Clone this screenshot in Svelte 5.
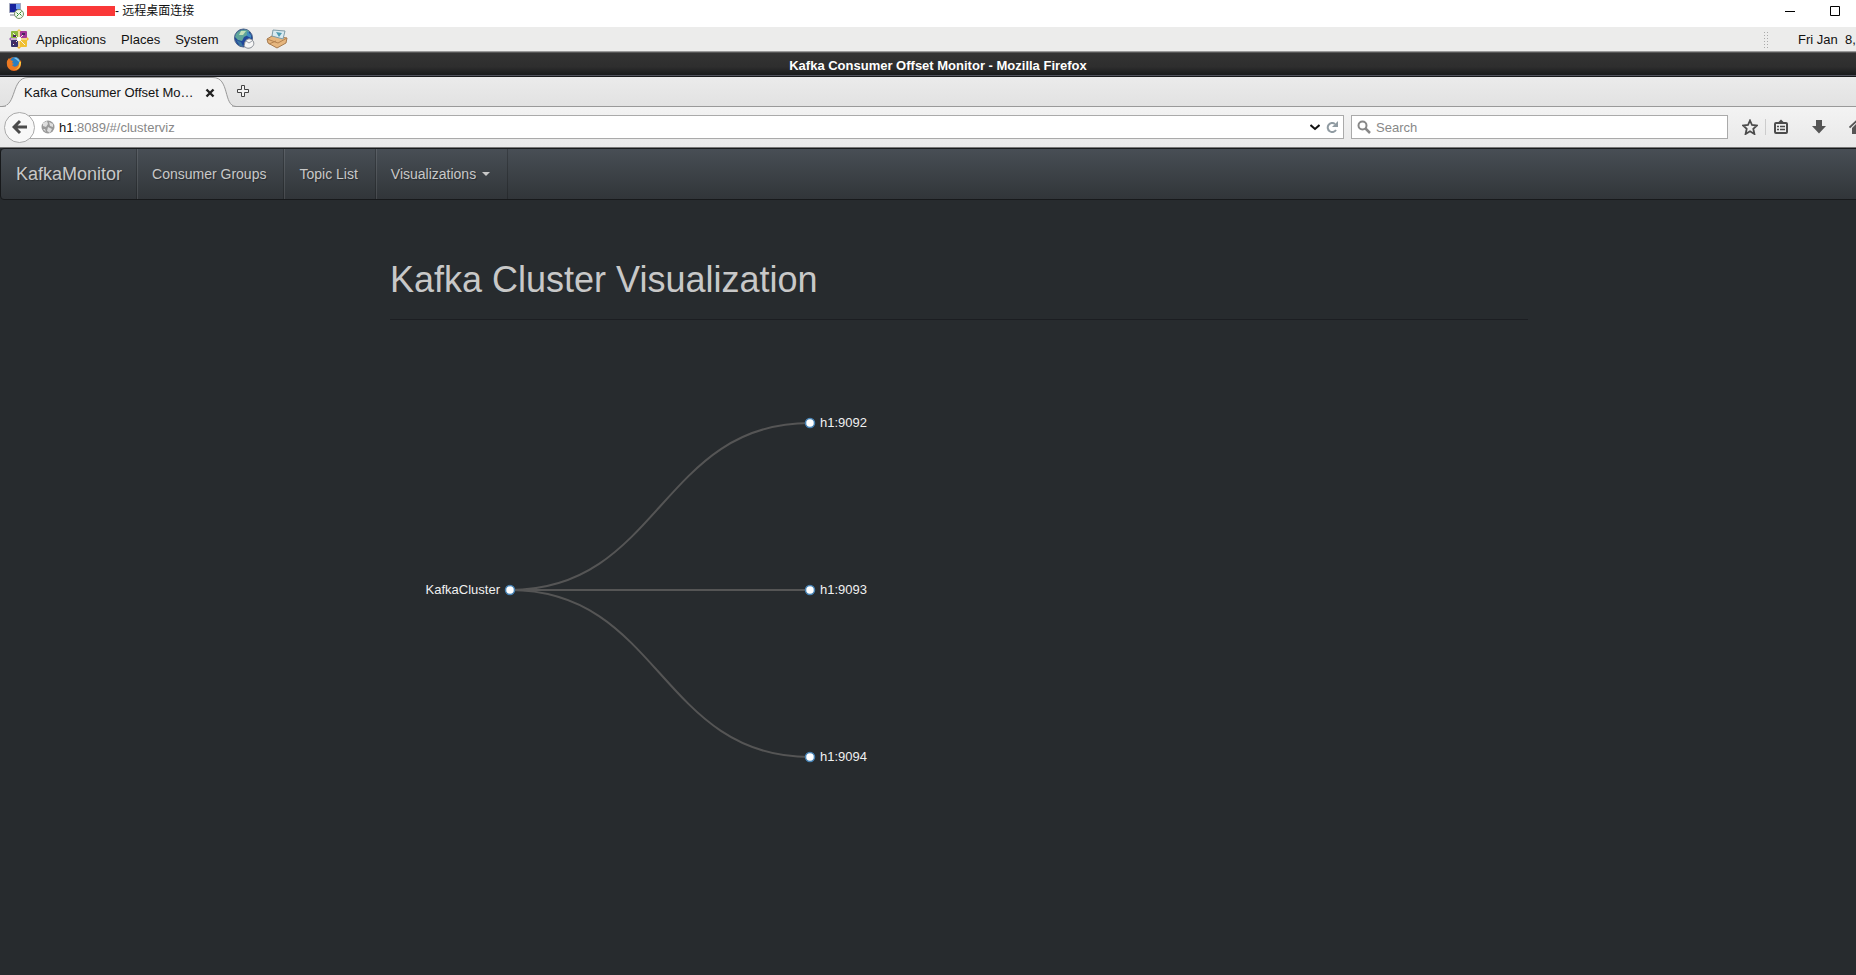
<script lang="ts">
  interface Broker {
    name: string;
    y: number;
  }

  const menus = ['Applications', 'Places', 'System'];
  const navItems = [
    { label: 'Consumer Groups', href: '#/' },
    { label: 'Topic List', href: '#/topics' },
  ];

  // tree layout, in the diagram's own coordinates
  const root = { name: 'KafkaCluster', x: 120, y: 250 };
  const leafX = 420;
  const brokers: Broker[] = [
    { name: 'h1:9092', y: 83 },
    { name: 'h1:9093', y: 250 },
    { name: 'h1:9094', y: 417 },
  ];

  function link(b: Broker) {
    const mid = (root.x + leafX) / 2;
    return `M${root.x},${root.y}C${mid},${root.y} ${mid},${b.y} ${leafX},${b.y}`;
  }
</script>

<div class="viewport">
  <header class="rdp-bar">
    <svg class="rdp-icon" width="16" height="16" viewBox="0 0 16 16">
      <path d="M1.500.500h11v9h-11z" fill="#16209c" stroke="#a3a8bd" />
      <path d="M8 1h4v5H8z" fill="#6f9cf0" />
      <path d="M2 11h7v2H2z" fill="#b9bbc6" />
      <circle cx="11" cy="11" r="4.500" fill="#f4faee" stroke="#789068" />
      <path d="M8.500 9.500l2 2-2 2M13.500 8.500l-2 2 2 2" fill="none" stroke="#2c8a2c" />
    </svg>
    <span class="redacted"></span>
    <span class="rdp-title">- 远程桌面连接</span>
    <div class="rdp-buttons">
      <button aria-label="Minimize">
        <svg width="10" height="10" viewBox="0 0 10 10"><path d="M0 5.500h10" stroke="#000" /></svg>
      </button>
      <button aria-label="Maximize">
        <svg width="10" height="10" viewBox="0 0 10 10"><path d="M.5.5h9v9h-9z" fill="none" stroke="#000" /></svg>
      </button>
    </div>
  </header>

  <div class="desktop">
    <div class="panel">
      <svg class="gnome" width="22" height="22" viewBox="0 0 22 22">
        <path d="M11 1l4 4-4 5-4-5z" fill="#f0c84a" />
        <path d="M11 12l4 5-4 4-4-4z" fill="#f2b52c" />
        <path d="M1 11l4-4 5 4-5 4z" fill="#a06cb8" />
        <path d="M12 11l5-4 4 4-4 4z" fill="#f4bc38" />
        <rect x="3" y="3" width="7" height="7" rx="1" fill="#8cb83c" />
        <rect x="12" y="3" width="7" height="7" rx="1" fill="#a53598" />
        <rect x="3" y="12" width="7" height="7" rx="1" fill="#38306c" />
        <rect x="12" y="12" width="7" height="7" rx="1" fill="#f0c030" />
        <path d="M11 3v16M3 11h16M5 5l12 12M17 5L5 17" stroke="#f2eee8" />
        <path d="M5 8h3M14 6h3M5 15h3" stroke="#4b2560" stroke-width="2" />
        <circle cx="11" cy="11" r="2" fill="#fff" />
      </svg>
      {#each menus as menu}
        <button class="menu">{menu}</button>
      {/each}
      <div class="launchers">
        <button aria-label="Web browser">
          <svg width="22" height="22" viewBox="0 0 22 22">
            <circle cx="10.500" cy="10" r="9" fill="#20479a" stroke="#4d6488" />
            <path d="M3 6c3-5 10-5 13-3l-1 4-4 2-2 4-4-1-3-3z" fill="#5fa59a" />
            <path d="M8 3l5 0-3 4-4 0z" fill="#c5e0b8" />
            <path d="M14 3l4 4 0 3-4-2z" fill="#3f8cc0" />
            <path d="M3 12l5 2 2 4-3 0z" fill="#3a76a0" />
            <path d="M12 14c2-4 6-4 8-1 2 3 0 6-3 7-3 1-5-1-6-2z" fill="#f6f6f6" stroke="#888d94" />
            <path d="M13 13l3 2 3-2" fill="none" stroke="#9aa0a8" />
          </svg>
        </button>
        <button aria-label="Mail">
          <svg width="24" height="22" viewBox="0 0 24 22">
            <path d="M2 11l5-3 15 2-1 5-9 5-9-5z" fill="#e6b67e" stroke="#a57b50" />
            <path d="M8 2l12 1-2 8-11-3z" fill="#d9eaf0" stroke="#7e9ca8" />
            <path d="M11 4l6 1-3 4z" fill="#4d9ab0" />
            <path d="M2 11l11 4 9-5M4 16l7-3" fill="none" stroke="#b58350" />
          </svg>
        </button>
      </div>
      <span class="grip"></span>
      <span class="clock">Fri Jan &nbsp;8,</span>
    </div>

    <div class="window-title">
      <svg class="firefox" width="16" height="16" viewBox="0 0 16 16">
        <circle cx="8" cy="8" r="7" fill="#e66a1f" />
        <circle cx="9" cy="6" r="5" fill="#2b7fc0" />
        <path d="M8 2c3-1 6 2 6 5-1-2-3-2-3-3z" fill="#80c4e8" />
        <path d="M1 5l2-3 1 2 3 1-1 2 2 1-2 1c2 3 6 2 7-2l2-3c1 6-3 10-7 10-5 0-8-4-7-9z" fill="#ed7a22" />
        <path d="M15 6c0 5-3 8-7 8 4-1 6-4 5-8z" fill="#f6ce42" />
      </svg>
      <span>Kafka Consumer Offset Monitor - Mozilla Firefox</span>
    </div>

    <div class="tabs">
      <div class="tab">
        <svg class="tab-shape" width="236" height="31" viewBox="0 0 236 31" aria-hidden="true">
          <path d="M0 30.500h2C17 30 11 1.500 28 1.500h185c17 0 10 28.500 23 29" fill="#f3f3f3" stroke="#999" />
          <path d="M6 30.500h226" stroke="#f3f3f3" stroke-width="2" />
        </svg>
        <span class="tab-label">Kafka Consumer Offset Mo…</span>
        <button class="tab-close" aria-label="Close tab">
          <svg width="10" height="10" viewBox="0 0 10 10"><path d="M1.500 1.500l7 7M8.500 1.500l-7 7" stroke="#222" stroke-width="2.400" /></svg>
        </button>
      </div>
      <button class="new-tab" aria-label="New tab">
        <svg width="13" height="13" viewBox="0 0 13 13">
          <path d="M4.500.5h3v4h4v3h-4v4h-3v-4h-4v-3h4z" fill="#f4f4f4" stroke="#444" />
        </svg>
      </button>
    </div>

    <div class="toolbar">
      <button class="back" aria-label="Back">
        <svg width="16" height="16" viewBox="0 0 16 16">
          <path d="M8 2L2 8l6 6M3 8h12" fill="none" stroke="#4b4b4b" stroke-width="3" />
        </svg>
      </button>
      <div class="address">
        <svg width="14" height="14" viewBox="0 0 14 14">
          <circle cx="7" cy="7" r="6.500" fill="#999" />
          <path d="M2 3l4-2 1 3-2 3-3-1zM8 2l4 2 0 3-3-1zM7 7l4 2-2 4-3-2zM2 9l2 0 1 3z" fill="#dedede" />
        </svg>
        <span class="url"><b>h1</b>:8089/#/clusterviz</span>
        <button aria-label="Show history">
          <svg width="10" height="8" viewBox="0 0 10 8"><path d="M.5 2l4.500 4 4.500-4" fill="none" stroke="#111" stroke-width="2" /></svg>
        </button>
        <button aria-label="Reload">
          <svg width="13" height="12" viewBox="0 0 13 12">
            <path d="M10 9A4.500 4.500 0 1 1 9 3" fill="none" stroke="#909ba2" stroke-width="2" />
            <path d="M12 0v6H6z" fill="#909ba2" />
          </svg>
        </button>
      </div>
      <label class="search">
        <svg width="14" height="14" viewBox="0 0 14 14">
          <circle cx="5.500" cy="5.500" r="4" fill="none" stroke="#888" stroke-width="2" />
          <path d="M8.500 8.500l4.500 4.500" stroke="#888" stroke-width="2.500" />
        </svg>
        <input type="text" placeholder="Search" aria-label="Search" />
      </label>
      <div class="tools">
        <button aria-label="Bookmark this page">
          <svg width="16" height="16" viewBox="0 0 16 16">
            <path d="M8 1.500l2 4.500 5 .5-3.700 3.300L12.400 15 8 12.300 3.600 15l1.100-5.200L1 6.500 6 6z" fill="none" stroke="#4c4c4c" stroke-width="1.800" />
          </svg>
        </button>
        <i class="rule"></i>
        <button aria-label="Bookmarks">
          <svg width="16" height="16" viewBox="0 0 16 16">
            <rect x="2" y="4" width="12" height="10" rx="1" fill="none" stroke="#4c4c4c" stroke-width="2" />
            <path d="M5 3.500L8 .5l3 3z" fill="#4c4c4c" />
            <path d="M4 7.500h2M7 7.500h5M4 10.500h2M7 10.500h5" stroke="#4c4c4c" stroke-width="1.500" />
          </svg>
        </button>
        <button class="spaced" aria-label="Downloads">
          <svg width="16" height="16" viewBox="0 0 16 16"><path d="M5 1h6v6h4l-7 7.500L1 7h4z" fill="#555" /></svg>
        </button>
        <button class="spaced" aria-label="Home">
          <svg width="16" height="16" viewBox="0 0 16 16">
            <path d="M.5 8.500L8 1.500l7.500 7" fill="none" stroke="#555" stroke-width="1.800" />
            <path d="M3 9l5-5 5 5v6h-4v-4H7v4H3z" fill="#555" />
          </svg>
        </button>
      </div>
    </div>

    <nav class="navbar">
      <a class="brand" href="#/">KafkaMonitor</a>
      {#each navItems as item}
        <a href={item.href}>{item.label}</a>
      {/each}
      <a href="#/clusterviz">Visualizations <i class="caret"></i></a>
    </nav>

    <main class="container">
      <h1>Kafka Cluster Visualization</h1>
      <svg class="tree" width="960" height="500" viewBox="0 0 960 500">
        {#each brokers as broker}
          <path class="link" d={link(broker)} />
        {/each}
        {#each brokers as broker}
          <circle cx={leafX} cy={broker.y} r="4.500" />
          <text x={leafX + 10} y={broker.y + 4}>{broker.name}</text>
        {/each}
        <circle cx={root.x} cy={root.y} r="4.500" />
        <text x={root.x - 10} y={root.y + 4} text-anchor="end">{root.name}</text>
      </svg>
    </main>
  </div>
</div>

<style>
  :global(body) {
    background: #272b2e;
  }

  .viewport {
    display: flex;
    flex-direction: column;
    min-height: 100vh;
    overflow: hidden;
    font-family: "Liberation Sans", Arial, "Noto Sans CJK SC", sans-serif;
    font-size: 13px;
    color: #111;
  }

  button {
    display: flex;
    align-items: center;
    justify-content: center;
    padding: 0;
    border: 0;
    background: none;
    font: inherit;
    color: inherit;
  }

  svg {
    flex-shrink: 0;
  }

  .rdp-bar {
    display: flex;
    align-items: center;
    height: 27px;
    padding: 0 16px 5px 8px;
    box-sizing: border-box;
    background: #fff;
  }

  .redacted {
    width: 88px;
    height: 10px;
    margin-left: 3px;
    background: #fa3838;
  }

  .rdp-title {
    font-size: 12px;
    line-height: 16px;
  }

  .rdp-buttons {
    display: flex;
    gap: 35px;
    margin-left: auto;
  }

  /* the remote screen is a little wider than the client window */
  .desktop {
    display: flex;
    flex-direction: column;
    flex: 1;
    width: calc(100% + 62px);
    background: #272b2e;
  }

  .panel {
    display: flex;
    align-items: center;
    height: 25px;
    padding-left: 8px;
    box-sizing: border-box;
    border-bottom: 1px solid #999;
    background: #ececeb;
  }

  .menu {
    margin-right: 15px;
  }

  .gnome {
    margin-right: 6px;
  }

  .launchers {
    display: flex;
    gap: 10px;
  }

  .grip {
    width: 5px;
    height: 17px;
    margin-left: auto;
    background: radial-gradient(circle, #aaa 1px, transparent 1px) 0 0 / 3px 3px;
  }

  .clock {
    width: 120px;
    margin-left: 30px;
    white-space: nowrap;
  }

  .window-title {
    display: flex;
    align-items: center;
    height: 25px;
    padding: 1px 42px 0 0;
    box-sizing: border-box;
    border-top: 1px solid #555;
    border-bottom: 1px solid #17191b;
    background: linear-gradient(#333 0%, #2e2e2e 60%, #191b1c 94%, #50525c 95%);
    color: #fff;
    font-weight: bold;
  }

  .window-title span {
    flex: 1;
    margin-left: -22px;
    text-align: center;
  }

  .firefox {
    margin: 0 0 2px 6px;
  }

  .tabs {
    display: flex;
    align-items: center;
    height: 30px;
    box-sizing: border-box;
    border-bottom: 1px solid #999;
    background: linear-gradient(#ebebeb, #e2e2e2);
  }

  .tab {
    position: relative;
    display: flex;
    align-items: center;
    width: 236px;
    height: 31px;
    padding: 2px 0 0 24px;
    box-sizing: border-box;
  }

  .tab-shape {
    position: absolute;
    left: 0;
    top: 0;
  }

  .tab-label {
    position: relative;
    width: 181px;
    white-space: nowrap;
  }

  .tab-close {
    position: relative;
  }

  .toolbar {
    display: flex;
    align-items: center;
    height: 41px;
    padding: 0 8px 0 4px;
    box-sizing: border-box;
    border-bottom: 1px solid #777;
    background: linear-gradient(#f3f3f3, #e9e9e9);
  }

  .back {
    z-index: 1;
    width: 31px;
    height: 31px;
    box-sizing: border-box;
    flex-shrink: 0;
    border: 1px solid #aaa;
    border-radius: 50%;
    background: #f8f8f8;
  }

  .new-tab {
    width: 14px;
  }

  .address,
  .search {
    display: flex;
    align-items: center;
    height: 24px;
    box-sizing: border-box;
    border: 1px solid #aaa;
    background: #fff;
  }

  .address {
    flex: 1;
    gap: 6px;
    margin-left: -6px;
    padding: 0 4px 0 11px;
  }

  .url {
    flex: 1;
    margin-left: -2px;
    color: #888;
  }

  .url b {
    color: #111;
    font-weight: normal;
  }

  .search {
    width: 377px;
    gap: 5px;
    margin-left: 7px;
    padding: 0 6px 0 5px;
  }

  .search input {
    flex: 1;
    min-width: 0;
    padding: 0;
    border: 0;
    outline: 0;
    background: none;
    font: inherit;
  }

  .search input::placeholder {
    color: #888;
    opacity: 1;
  }

  .tools {
    display: flex;
    align-items: center;
    width: 168px;
    padding-left: 14px;
  }

  .rule {
    width: 1px;
    height: 16px;
    margin: 0 7px;
    background: #ccc;
  }

  .spaced {
    margin-left: 22px;
  }

  .navbar {
    display: flex;
    height: 52px;
    box-sizing: border-box;
    border: 1px solid #17191b;
    border-radius: 4px;
    background: linear-gradient(#484e55, #3a3f44 60%, #313539);
    text-shadow: 1px 1px 1px rgba(0, 0, 0, 0.3);
  }

  .navbar a {
    display: flex;
    align-items: center;
    padding: 0 17px 0 14px;
    border-right: 1px solid rgba(0, 0, 0, 0.2);
    border-left: 1px solid rgba(255, 255, 255, 0.1);
    color: #c8c8c8;
    font-size: 14px;
    text-decoration: none;
  }

  .navbar .brand {
    padding: 0 14px 0 15px;
    border-left: 0;
    font-size: 18px;
  }

  .caret {
    margin-left: 6px;
    border: 4px solid transparent;
    border-top-color: #c8c8c8;
    border-bottom: 0;
  }

  .container {
    width: 1138px;
    max-width: 90%;
    margin: 0 auto;
  }

  h1 {
    margin: 60px 0 20px;
    padding-bottom: 19px;
    border-bottom: 1px solid #1c1e22;
    color: #c8c8c8;
    font-size: 36px;
    font-weight: 500;
    line-height: 40px;
  }

  .tree {
    display: block;
  }

  .link {
    fill: none;
    stroke: #555;
    stroke-width: 2;
  }

  .tree circle {
    fill: #fff;
    stroke: steelblue;
    stroke-width: 1.5px;
  }

  .tree text {
    fill: #f0f0f0;
    font-size: 13px;
  }
</style>
